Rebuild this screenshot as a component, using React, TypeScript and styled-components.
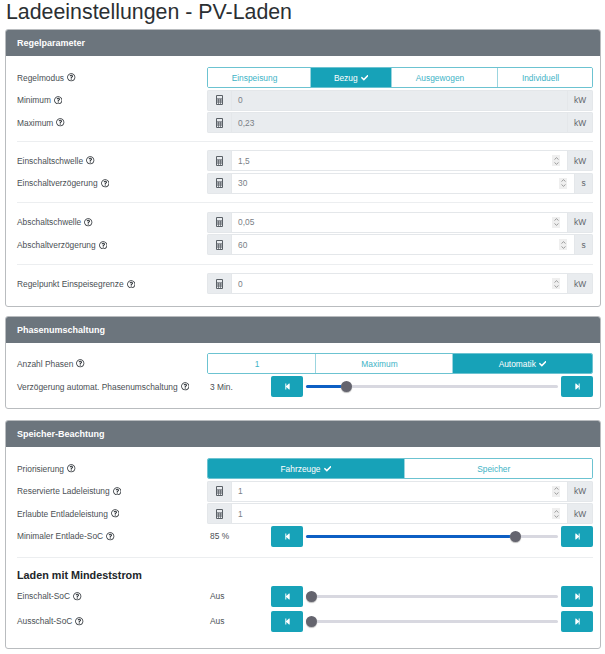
import React from "react";
import styled, { createGlobalStyle } from "styled-components";
import { FaCheck, FaRegQuestionCircle, FaStepBackward, FaStepForward } from "react-icons/fa";

const Global = createGlobalStyle`
  html, body { margin: 0; padding: 0; background: #fff; }
  body { font-family: "Liberation Sans", Arial, sans-serif; color: #212529; font-size: 8.4px; width: 605px; height: 654px; overflow: hidden; }
`;
const Page = styled.div`padding: 0 4px 0 5px;`;
const Title = styled.h1`margin: 0; font-size: 21.35px; font-weight: 400; line-height: 24px; height: 29px; padding-left: 1px; color: #2b2f33;`;
const Card = styled.section<{ $h: number; $gap: number }>`
  border: 1px solid #b9bcbf; border-radius: 3px; height: ${p => p.$h}px; margin-bottom: ${p => p.$gap}px; box-sizing: border-box; overflow: hidden;
`;
const CardHead = styled.header`
  height: 26px; background: #6c757d; color: #fff; font-weight: 700; font-size: 9px; line-height: 26px; padding-left: 11px;
`;
const CardBody = styled.div<{ $top: number }>`padding: ${p => p.$top}px 7px 0 11px;`;
const Row = styled.div<{ $mb?: number }>`
  display: grid; grid-template-columns: 190px 386px; height: 21px; align-items: center; margin-bottom: ${p => p.$mb ?? 1.6}px;
`;
const Label = styled.div`display: flex; align-items: center; gap: 3px; color: #4a4f54; white-space: nowrap;`;
const Help = styled(FaRegQuestionCircle)`font-size: 8.5px; color: #33383d;`;
const Group = styled.div`display: flex; height: 21px; border: 1px solid #6cc3d1; border-radius: 2px; box-sizing: border-box; overflow: hidden;`;
const Seg = styled.div<{ $on?: boolean; $w: number }>`
  width: ${p => p.$w}px; flex: none; box-sizing: border-box; display: flex; align-items: center; justify-content: center; gap: 3px;
  padding-right: ${p => (p.$on ? 0 : 9)}px;
  background: ${p => (p.$on ? "#17a2b8" : "#fff")}; color: ${p => (p.$on ? "#fff" : "#3eb3c6")};
  border-right: 1px solid #9bd5df; &:last-child { border-right: 0; flex: 1; }
`;
const Check = styled(FaCheck)`font-size: 7.5px;`;
const InputWrap = styled.div`display: flex; height: 21px; border-radius: 2px; overflow: hidden;`;
const Addon = styled.div<{ $w: number }>`
  width: ${p => p.$w}px; flex: none; background: #e9ecef; color: #5f656b; border: 1px solid #e4e7ea; box-sizing: border-box; display: flex; align-items: center; justify-content: center;
`;
const Field = styled.div<{ $off?: boolean }>`
  flex: 1; display: flex; align-items: center; justify-content: space-between; box-sizing: border-box; padding: 0 7px 0 6px;
  border: 1px solid #e4e7ea; border-width: 1px 0; background: ${p => (p.$off ? "#e9ecef" : "#fff")}; color: #7a8086;
`;
const Spin = styled.div`
  width: 8px; height: 11px; background: #efefef; display: flex; flex-direction: column; align-items: center; justify-content: center; gap: 2px;
  svg { display: block; }
`;
const Hr = styled.div<{ $t: number; $b: number }>`height: 1px; background: #eceef0; margin: ${p => p.$t}px 0 ${p => p.$b}px;`;
const SliderCell = styled.div`display: grid; grid-template-columns: 64px 32px 1fr 32px; align-items: center; height: 21px; color: #4a4f54;`;
const Value = styled.span`padding-left: 3px;`;
const StepBtn = styled.div`height: 21px; background: #17a2b8; border-radius: 2px; color: #fff; display: flex; align-items: center; justify-content: center; font-size: 7px;`;
const Track = styled.div`height: 3px; margin: 0 3px; background: #d8d8e0; border-radius: 2px; position: relative;`;
const Fill = styled.div`height: 100%; background: #0d5fc4; border-radius: 2px;`;
const Knob = styled.div`position: absolute; top: -4px; width: 11px; height: 11px; margin-left: -5.5px; border-radius: 50%; background: #64646e; box-shadow: 0 1px 1px #bbb;`;
const SubHead = styled.h3`margin: 0 0 1px; font-size: 10.8px; line-height: 20px; font-weight: 700; color: #212529;`;

const Lbl = ({ t }: { t: string }) => <Label>{t}<Help /></Label>;
const Calc = () => (
  <svg width="7" height="10" viewBox="0 0 7 10">
    <rect x="0" y="0" width="7" height="10" rx="1" fill="#5a6066" />
    <rect x="1" y="1" width="5" height="2.4" fill="#e9ecef" />
    <path d="M1 4.6h1.2v1H1zM2.9 4.6h1.2v1H2.9zM4.8 4.6H6v1H4.8zM1 6.4h1.2v1H1zM2.9 6.4h1.2v1H2.9zM4.8 6.4H6v1H4.8zM1 8h1.2v1H1zM2.9 8h1.2v1H2.9zM4.8 8H6v1H4.8z" fill="#e9ecef" />
  </svg>
);
const Spinner = () => (
  <Spin>
    <svg width="5" height="3" viewBox="0 0 5 3"><path d="M.5 2.5 2.5.7l2 1.8" fill="none" stroke="#888" strokeWidth=".8" /></svg>
    <svg width="5" height="3" viewBox="0 0 5 3"><path d="M.5.5l2 1.8 2-1.8" fill="none" stroke="#888" strokeWidth=".8" /></svg>
  </Spin>
);
const Num = ({ label, value, unit, off, mb }: { label: string; value: string; unit: string; off?: boolean; mb?: number }) => (
  <Row $mb={mb}>
    <Lbl t={label} />
    <InputWrap>
      <Addon $w={25}><Calc /></Addon>
      <Field $off={off}>{value}{!off && <Spinner />}</Field>
      <Addon $w={unit === "s" ? 19 : 26}>{unit}</Addon>
    </InputWrap>
  </Row>
);
const Buttons = ({ items }: { items: [string, number, boolean?][] }) => (
  <Group>
    {items.map(([t, w, on]) => <Seg key={t} $w={w} $on={on}>{t}{on && <Check />}</Seg>)}
  </Group>
);
const Slide = ({ label, value, pct, mb }: { label: string; value: string; pct: number; mb?: number }) => (
  <Row $mb={mb}>
    <Lbl t={label} />
    <SliderCell>
      <Value>{value}</Value>
      <StepBtn><FaStepBackward /></StepBtn>
      <Track>
        <Fill style={{ width: `calc(5.5px + ${pct / 100} * (100% - 11px))` }} />
        <Knob style={{ left: `calc(5.5px + ${pct / 100} * (100% - 11px))` }} />
      </Track>
      <StepBtn><FaStepForward /></StepBtn>
    </SliderCell>
  </Row>
);

export default function App() {
  return (
    <Page>
      <Global />
      <Title>Ladeeinstellungen - PV-Laden</Title>
      <Card $h={278} $gap={9}>
        <CardHead>Regelparameter</CardHead>
        <CardBody $top={11}>
          <Row>
            <Lbl t="Regelmodus" />
            <Buttons items={[["Einspeisung", 103], ["Bezug", 81, true], ["Ausgewogen", 106], ["Individuell", 0]]} />
          </Row>
          <Num label="Minimum" value="0" unit="kW" off />
          <Num label="Maximum" value="0,23" unit="kW" off mb={0} />
          <Hr $t={8} $b={8} />
          <Num label="Einschaltschwelle" value="1,5" unit="kW" />
          <Num label="Einschaltverzögerung" value="30" unit="s" mb={0} />
          <Hr $t={8} $b={9} />
          <Num label="Abschaltschwelle" value="0,05" unit="kW" />
          <Num label="Abschaltverzögerung" value="60" unit="s" mb={0} />
          <Hr $t={9} $b={8} />
          <Num label="Regelpunkt Einspeisegrenze" value="0" unit="kW" />
        </CardBody>
      </Card>
      <Card $h={93} $gap={11}>
        <CardHead>Phasenumschaltung</CardHead>
        <CardBody $top={10}>
          <Row $mb={2}>
            <Lbl t="Anzahl Phasen" />
            <Buttons items={[["1", 108], ["Maximum", 137], ["Automatik", 0, true]]} />
          </Row>
          <Slide label="Verzögerung automat. Phasenumschaltung" value="3 Min." pct={14.5} />
        </CardBody>
      </Card>
      <Card $h={229} $gap={0}>
        <CardHead>Speicher-Beachtung</CardHead>
        <CardBody $top={11}>
          <Row>
            <Lbl t="Priorisierung" />
            <Buttons items={[["Fahrzeuge", 196.5, true], ["Speicher", 0]]} />
          </Row>
          <Num label="Reservierte Ladeleistung" value="1" unit="kW" />
          <Num label="Erlaubte Entladeleistung" value="1" unit="kW" />
          <Slide label="Minimaler Entlade-SoC" value="85 %" pct={84.8} />
          <Hr $t={10} $b={7} />
          <SubHead>Laden mit Mindeststrom</SubHead>
          <Slide label="Einschalt-SoC" value="Aus" pct={0} mb={4} />
          <Slide label="Ausschalt-SoC" value="Aus" pct={0} />
        </CardBody>
      </Card>
    </Page>
  );
}
